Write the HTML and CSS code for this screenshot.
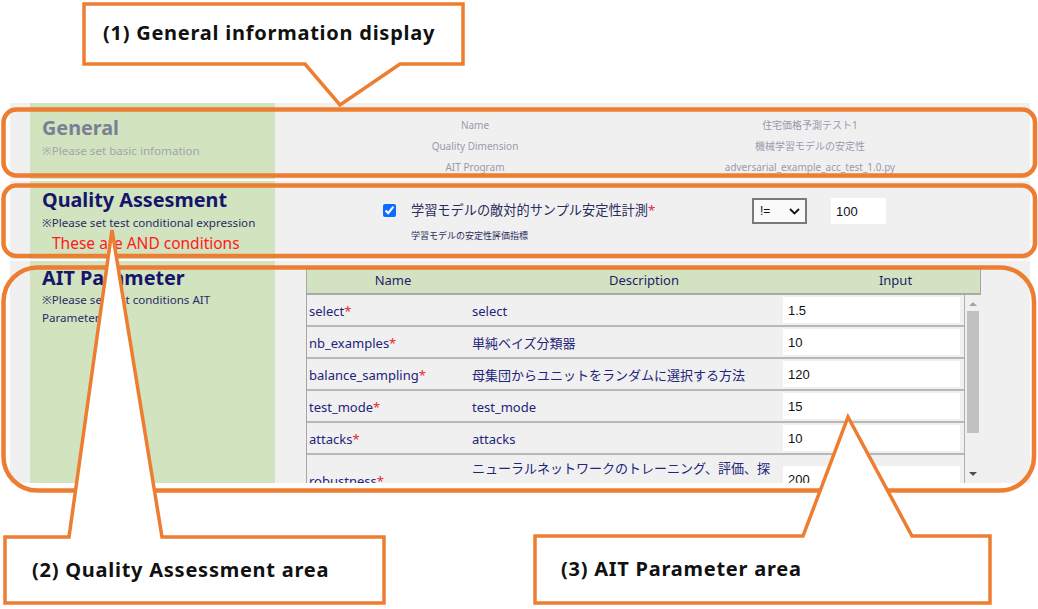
FILE: index.html
```html
<!DOCTYPE html>
<html lang="ja">
<head>
<meta charset="utf-8">
<title>AIT settings</title>
<link rel="stylesheet" href="styles.css">
</head>
<body>
<div class="page">
  <div class="screen">
    <section class="sec sec-general">
      <div class="side side-general">
        <h2 class="title muted">General</h2>
        <p class="note muted-note">※Please set basic infomation</p>
      </div>
      <div class="main general-main">
        <div class="info-grid">
          <span>Name</span><span>住宅価格予測テスト1</span>
          <span>Quality Dimension</span><span>機械学習モデルの安定性</span>
          <span>AIT Program</span><span>adversarial_example_acc_test_1.0.py</span>
        </div>
      </div>
    </section>

    <section class="sec sec-quality">
      <div class="side side-quality">
        <h2 class="title">Quality Assesment</h2>
        <p class="note">※Please set test conditional expression</p>
        <p class="and-note">These are AND conditions</p>
      </div>
      <div class="main quality-main">
        <div class="q-check">
          <input type="checkbox" class="cb" checked>
          <div class="q-text">
            <div class="q-label">学習モデルの敵対的サンプル安定性計測<span class="req">*</span></div>
            <div class="q-sub">学習モデルの安定性評価指標</div>
          </div>
        </div>
        <div class="select"><span>!=</span>
          <svg class="chev" width="11" height="7" viewBox="0 0 11 7"><path d="M1 1 L5.5 5.5 L10 1" fill="none" stroke="#111" stroke-width="1.8"/></svg>
        </div>
        <input class="val" type="text" value="100">
      </div>
    </section>

    <section class="sec sec-ait">
      <div class="side side-ait">
        <h2 class="title">AIT Parameter</h2>
        <p class="note note-wrap">※Please set test conditions AIT Parameter</p>
      </div>
      <div class="main ait-main">
        <div class="ptable">
          <div class="phead">
            <span>Name</span><span>Description</span><span>Input</span>
          </div>
          <div class="pbody">
            <div class="rows">
              <div class="row"><span class="c-name">select<span class="req">*</span></span><span class="c-desc">select</span><span class="c-in"><input type="text" value="1.5"></span></div>
              <div class="row"><span class="c-name">nb_examples<span class="req">*</span></span><span class="c-desc">単純ベイズ分類器</span><span class="c-in"><input type="text" value="10"></span></div>
              <div class="row"><span class="c-name">balance_sampling<span class="req">*</span></span><span class="c-desc">母集団からユニットをランダムに選択する方法</span><span class="c-in"><input type="text" value="120"></span></div>
              <div class="row"><span class="c-name">test_mode<span class="req">*</span></span><span class="c-desc">test_mode</span><span class="c-in"><input type="text" value="15"></span></div>
              <div class="row"><span class="c-name">attacks<span class="req">*</span></span><span class="c-desc">attacks</span><span class="c-in"><input type="text" value="10"></span></div>
              <div class="row row-tall"><span class="c-name">robustness<span class="req">*</span></span><span class="c-desc">ニューラルネットワークのトレーニング、評価、探索に使用する手法</span><span class="c-in"><input type="text" value="200"></span></div>
            </div>
            <div class="scrollbar">
              <svg class="arrow-up" width="8" height="5" viewBox="0 0 8 5"><path d="M0 5 L4 1 L8 5 Z" fill="#a3a3a3"/></svg>
              <div class="thumb"></div>
              <svg class="arrow-down" width="8" height="5" viewBox="0 0 8 5"><path d="M0 0 L4 4 L8 0 Z" fill="#505050"/></svg>
            </div>
          </div>
        </div>
      </div>
    </section>
  </div>

  <svg class="annot" width="1038" height="609" viewBox="0 0 1038 609">
    <rect x="3.5" y="109.5" width="1031.5" height="66" rx="13" fill="none" stroke="#ed7d31" stroke-width="4.5"/>
    <rect x="3.5" y="185.5" width="1031.5" height="70.5" rx="13" fill="none" stroke="#ed7d31" stroke-width="4.5"/>
    <rect x="3.5" y="267.5" width="1030.5" height="223" rx="34" fill="none" stroke="#ed7d31" stroke-width="4.5"/>
    <path d="M84 4 H463 V64 H400 L340 105 L305 64 H84 Z" fill="#fff" stroke="#ed7d31" stroke-width="3.5" stroke-linejoin="miter"/>
    <path d="M5 537 H69 L112 230 L162 537 H384 V603 H5 Z" fill="#fff" stroke="#ed7d31" stroke-width="3.5" stroke-linejoin="miter"/>
    <path d="M535 536 H803 L848 417 L912 536 H990 V603 H535 Z" fill="#fff" stroke="#ed7d31" stroke-width="3.5" stroke-linejoin="miter"/>
  </svg>
  <div class="callout-text ct1">(1) General information display</div>
  <div class="callout-text ct2">(2) Quality Assessment area</div>
  <div class="callout-text ct3">(3) AIT Parameter area</div>
</div>
</body>
</html>
```

FILE: styles.css
```css
* { box-sizing: border-box; }
html, body { margin: 0; padding: 0; background: #fff; }
body {
  font-family: "Noto Sans", "Noto Sans CJK JP", sans-serif;
  color: #1e1e6e;
}
.page {
  position: relative;
  width: 1038px;
  height: 609px;
  overflow: hidden;
  padding-top: 103px;
  padding-left: 10px;
}
.screen {
  width: 1020px;
  height: 380px;
  background: #f0f0f0;
  overflow: hidden;
  display: flex;
  flex-direction: column;
}
.sec {
  display: flex;
  flex: none;
}
.sec + .sec { border-top: 2px solid #fbfbfb; }
.sec-general { height: 76px; }
.sec-quality { height: 80px; }
.sec-ait { flex: 1; min-height: 0; }

.side {
  margin-left: 20px;
  width: 245px;
  flex: none;
  background: #d2e3c0;
  padding-left: 12px;
}
.side-general { padding-top: 13px; }
.side-quality { padding-top: 7px; }
.side-ait { padding-top: 5px; }

.title {
  margin: 0;
  font-size: 19.8px;
  line-height: 24px;
  font-weight: 700;
  color: #15156b;
}
.title.muted { color: #7a8093; }
.note {
  margin: 3px 0 0;
  font-size: 11.6px;
  line-height: 16px;
  color: #2a2a66;
  white-space: nowrap;
}
.muted-note { color: #a3a3ab; }
.note-wrap { line-height: 18px; margin-top: 1px; white-space: normal; width: 190px; }
.and-note {
  margin: 2px 0 0 10px;
  font-size: 15.5px;
  line-height: 20px;
  color: #ff1a1a;
  white-space: nowrap;
}

.main { flex: 1; min-width: 0; }

.general-main { padding-top: 12px; }
.info-grid {
  display: grid;
  grid-template-columns: 400px 270px;
  grid-auto-rows: 21px;
  font-size: 10px;
  line-height: 21px;
  color: #9e98ae;
  text-align: center;
}

.quality-main {
  display: flex;
  align-items: flex-start;
  padding-top: 17px;
  padding-left: 108px;
}
.q-check {
  width: 369px;
  display: flex;
  align-items: flex-start;
  margin-top: 3px;
}
.cb {
  width: 13px;
  height: 13px;
  margin: 3px 15px 0 0;
  accent-color: #0b6cff;
}
.q-label {
  font-size: 13.2px;
  line-height: 18px;
  color: #2b2b5e;
}
.q-sub {
  margin-top: 10px;
  font-size: 9px;
  line-height: 14px;
  color: #2b2b5e;
}
.req { color: #e8262e; }
.select {
  width: 55px;
  height: 26px;
  border: 2px solid #7a7a7a;
  background: #fafafa;
  display: flex;
  align-items: center;
  justify-content: space-between;
  padding: 0 5px 0 6px;
  font-family: "Liberation Sans", sans-serif;
  font-size: 12px;
  color: #111;
}
.val {
  margin-left: 24px;
  width: 55px;
  height: 26px;
  border: none;
  background: #fff;
  padding: 0 5px;
  font-family: "Liberation Sans", sans-serif;
  font-size: 13px;
  color: #111;
  outline: none;
}

.ait-main { padding-top: 7px; padding-left: 31px; }
.ptable { width: 675px; }
.phead {
  display: grid;
  grid-template-columns: 172px 330px 173px;
  height: 27px;
  background: #d3e3c1;
  border-left: 1px solid #a6a6a6;
  border-right: 1px solid #a6a6a6;
  border-bottom: 2px solid #a9a9a9;
  font-size: 13px;
  line-height: 25px;
  text-align: center;
  color: #1d1d6b;
}
.pbody {
  display: flex;
  height: 200px;
}
.rows {
  width: 659px;
  border-left: 1px solid #a6a6a6;
  border-right: 1px solid #b0b0b0;
}
.row {
  display: grid;
  grid-template-columns: 161px 315px 181px;
  height: 32px;
  border-bottom: 2px solid #b8b8b8;
  align-items: center;
  font-size: 13px;
  color: #23237a;
}
.c-name { padding-left: 2px; padding-top: 2px; line-height: 18px; }
.c-desc { padding-left: 4px; padding-top: 2px; line-height: 18px; }
.c-in { display: flex; align-items: center; }
.c-in input {
  width: 177px;
  height: 26px;
  border: none;
  background: #fff;
  padding: 0 5px;
  font-family: "Liberation Sans", sans-serif;
  font-size: 13px;
  color: #111;
  outline: none;
}
.row-tall { height: 56px; align-items: start; }
.row-tall .c-name { padding-top: 17px; }
.row-tall .c-desc { padding-top: 1px; line-height: 24px; }
.row-tall .c-in { padding-top: 11px; }
.scrollbar {
  width: 16px;
  display: flex;
  flex-direction: column;
  align-items: center;
  padding-top: 6px;
}
.arrow-up { flex: none; }
.thumb {
  width: 12px;
  height: 122px;
  margin-top: 5px;
  background: #c1c1c1;
}
.arrow-down { margin-top: 39px; flex: none; }

.annot {
  position: absolute;
  left: 0;
  top: 0;
  pointer-events: none;
}
.callout-text {
  position: absolute;
  font-family: "Noto Sans", sans-serif;
  font-weight: 700;
  font-size: 20px;
  letter-spacing: 0.75px;
  line-height: 26px;
  color: #111;
  white-space: nowrap;
}
.ct1 { left: 103px; top: 20px; }
.ct2 { left: 32px; top: 557px; }
.ct3 { left: 561px; top: 556px; }
```
